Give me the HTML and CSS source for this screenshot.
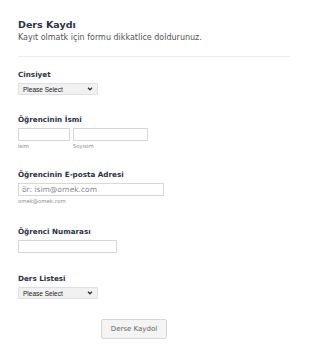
FILE: index.html
```html
<!DOCTYPE html>
<html lang="tr">
<head>
<meta charset="utf-8">
<link rel="stylesheet" href="styles.css">
</head>
<body>
<div class="form">
  <div class="header">
    <h1 class="title">Ders Kaydı</h1>
    <p class="subtitle">Kayıt olmatk için formu dikkatlice doldurunuz.</p>
  </div>
  <div class="field">
    <label class="label">Cinsiyet</label>
    <div class="select">Please Select<span class="chev"><svg width="6" height="4" viewBox="0 0 6 4"><path d="M1 0.8 L3 2.8 L5 0.8" fill="none" stroke="#333" stroke-width="1.3"/></svg></span></div>
  </div>
  <div class="field">
    <label class="label">Öğrencinin İsmi</label>
    <div class="name-row">
      <div class="name-col"><div class="input first"></div><span class="sub">İsim</span></div>
      <div class="name-col"><div class="input last"></div><span class="sub">Soyisim</span></div>
    </div>
  </div>
  <div class="field email-field">
    <label class="label">Öğrencinin E-posta Adresi</label>
    <div class="input email">ör: isim@ornek.com</div>
    <span class="sub">omek@omek.com</span>
  </div>
  <div class="field number-field">
    <label class="label">Öğrenci Numarası</label>
    <div class="input number"></div>
  </div>
  <div class="field">
    <label class="label">Ders Listesi</label>
    <div class="select">Please Select<span class="chev"><svg width="6" height="4" viewBox="0 0 6 4"><path d="M1 0.8 L3 2.8 L5 0.8" fill="none" stroke="#333" stroke-width="1.3"/></svg></span></div>
  </div>
  <div class="actions">
    <button class="submit">Derse Kaydol</button>
  </div>
</div>
</body>
</html>
```
FILE: styles.css
```css
html, body { margin: 0; padding: 0; background: #fff; }
body { font-family: "DejaVu Sans", Verdana, sans-serif; color: #2c3345; }
.form { padding: 19px 20px 0 18px; width: 272px; }
.header { padding-bottom: 13px; border-bottom: 1px solid #ececec; margin-bottom: 13px; }
.title { margin: 0; font-size: 9.5px; font-weight: bold; color: #2c3345; line-height: 12px; }
.subtitle { margin: 2px 0 0; font-size: 8px; color: #555; line-height: 10px; }
.field { margin-bottom: 20px; display: flex; flex-direction: column; align-items: flex-start; }
.email-field { margin-bottom: 22px; }
.number-field { margin-bottom: 21px; }
.label { font-size: 7.2px; font-weight: bold; color: #2c3345; line-height: 9px; margin-bottom: 4px; }
.select { width: 80px; height: 12px; box-sizing: border-box; background: #f1f1f1; border: 1px solid #e0e0e0; border-radius: 1px; font-family: "Liberation Sans", Arial, sans-serif; font-size: 6.5px; color: #222; padding-left: 4px; display: flex; align-items: center; justify-content: space-between; }
.chev { display: flex; padding-right: 4px; }
.name-row { display: flex; gap: 3px; }
.name-col { display: flex; flex-direction: column; }
.input { box-sizing: border-box; height: 13px; border: 1px solid #d8d8d8; background: #fff; }
.input.first { width: 52px; }
.input.last { width: 75px; }
.input.email { width: 146px; font-size: 7.5px; color: #888; padding-left: 3px; line-height: 11px; }
.input.number { width: 99px; }
.sub { font-size: 5.3px; color: #8a8a8a; margin-top: 2px; line-height: 7px; }
.actions { display: flex; padding-left: 83px; margin-top: 8px; }
.submit { width: 66px; height: 20px; font-family: inherit; font-size: 7px; color: #666; background: #f4f4f4; border: 1px solid #d8d8d8; border-radius: 2px; padding: 0; }
```
